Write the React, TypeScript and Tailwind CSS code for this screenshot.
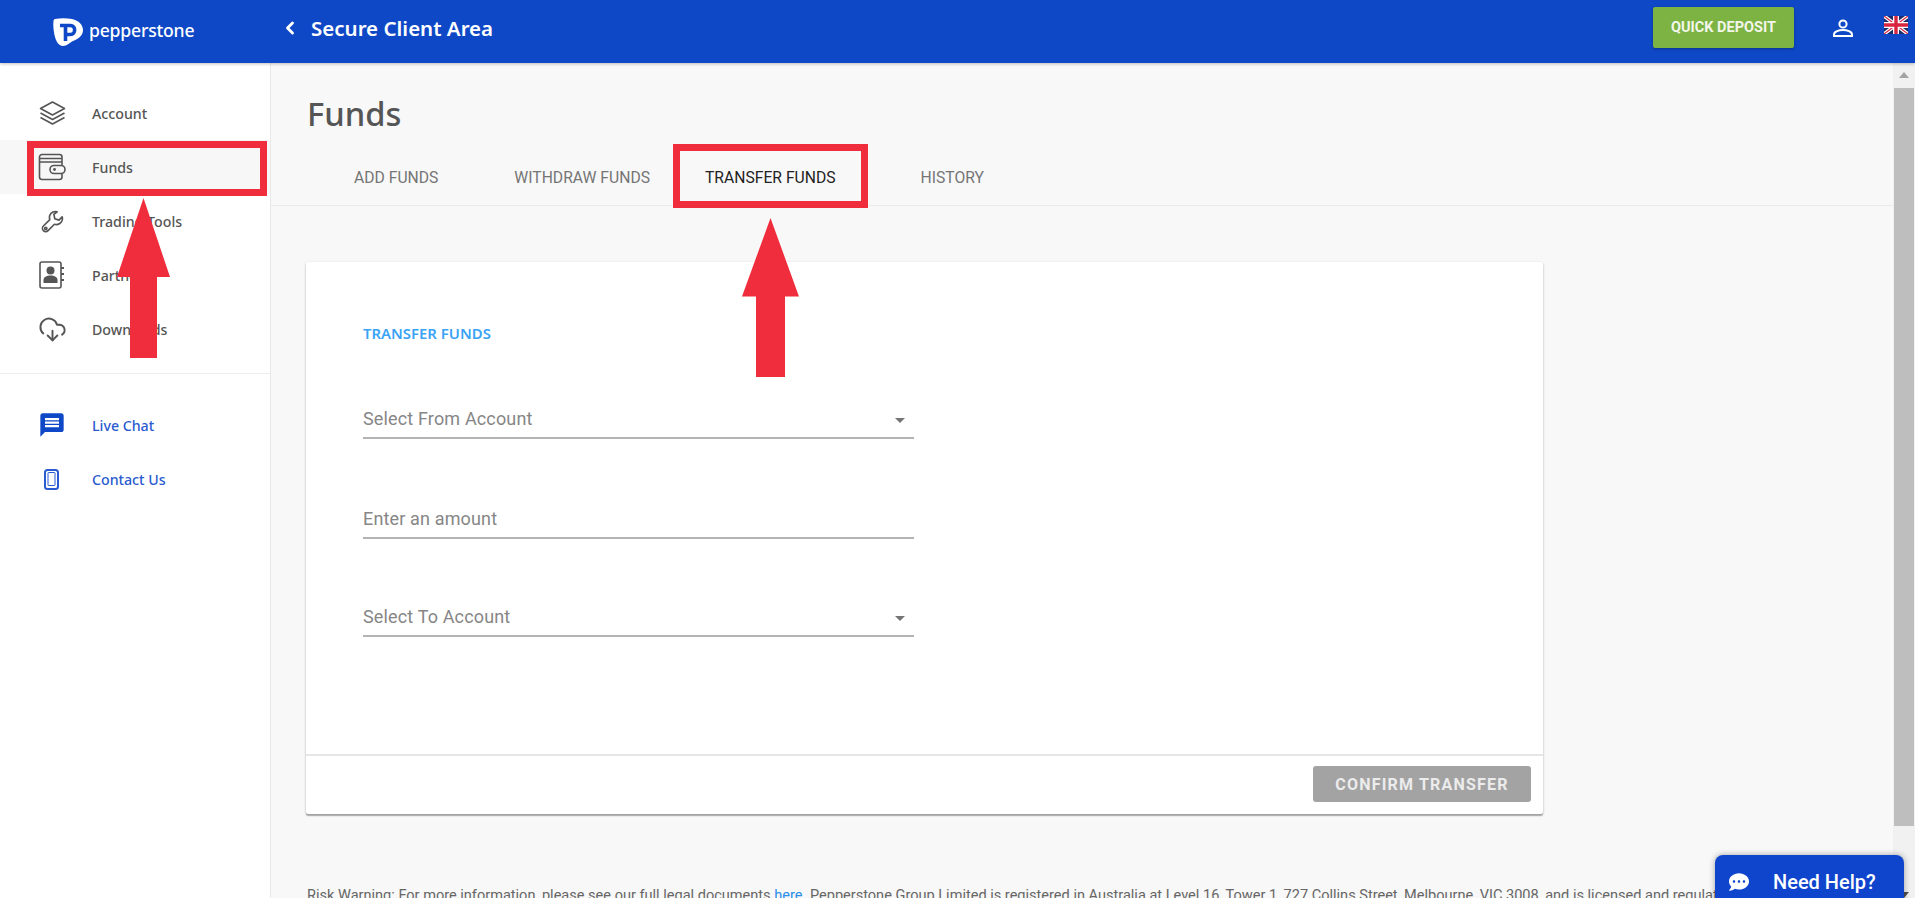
import { ChevronLeft, CloudDownload } from "lucide-react";
import { MdMessage } from "react-icons/md";
import { FaCommentDots } from "react-icons/fa";

function LayersIcon() {
  return (
    <svg width="27" height="24" viewBox="0 0 27 24" fill="none" stroke="#555" strokeWidth="1.6" strokeLinejoin="round">
      <path d="M13.5 1 25.5 7.5 13.5 14 1.5 7.5Z" />
      <path d="M1.5 12 13.5 18.5 25.5 12" />
      <path d="M1.5 16.5 13.5 23 25.5 16.5" />
    </svg>
  );
}

function WalletIcon() {
  return (
    <svg width="28" height="28" viewBox="0 0 28 28" fill="none" stroke="#555" strokeWidth="1.6">
      <path d="M24 13V4a2.5 2.5 0 0 0-2.5-2.5H4A2.5 2.5 0 0 0 1.5 4v20A2.5 2.5 0 0 0 4 26.5h17.5A2.5 2.5 0 0 0 24 24v-4" />
      <path d="M1.5 5.5H24M1.5 9H24" />
      <rect x="12" y="12.5" width="15" height="8" rx="4" fill="#f7f7f7" />
      <circle cx="16.5" cy="16.5" r="1.4" fill="#555" stroke="none" />
    </svg>
  );
}

function WrenchIcon() {
  return (
    <svg width="23" height="23" viewBox="0 0 25 25" fill="none" stroke="#555" strokeWidth="1.8" strokeLinejoin="round">
      <path d="M17.5 1.9A6.5 6.5 0 0 0 9.6 10.4L2.6 17.4a3.6 3.6 0 0 0 5.1 5.1L14.6 15.5A6.5 6.5 0 0 0 23 7.5L19.5 11 15 9.5 14 4.8Z" />
      <circle cx="5.2" cy="20" r="1.2" />
    </svg>
  );
}

function ContactsIcon() {
  return (
    <svg width="26" height="28" viewBox="0 0 26 28" fill="none">
      <rect x="1" y="1" width="21" height="26" rx="2" stroke="#555" strokeWidth="1.6" />
      <path d="M22 7h3M22 13h3M22 19h3" stroke="#555" strokeWidth="2" />
      <circle cx="11.5" cy="9.5" r="4" fill="#555" />
      <path d="M4.5 22v-3c0-3 3-4.5 7-4.5s7 1.5 7 4.5v3Z" fill="#555" />
    </svg>
  );
}

function PhoneIcon() {
  return (
    <svg width="15" height="21" viewBox="0 0 15 21" fill="none" stroke="#2a5bd0">
      <rect x="1" y="1" width="13" height="19" rx="2.5" strokeWidth="2" />
      <rect x="4" y="3.5" width="7" height="13" rx="0.5" strokeWidth="1" />
    </svg>
  );
}

function PersonIcon() {
  return (
    <svg width="20" height="18" viewBox="0 0 20 18" fill="none" stroke="#fff" strokeWidth="2">
      <circle cx="10" cy="5" r="3.6" />
      <path d="M1 17v-1.5C1 12.5 6 11 10 11s9 1.5 9 4.5V17Z" />
    </svg>
  );
}

function UkFlag() {
  return (
    <svg width="24" height="18" viewBox="0 0 24 18">
      <rect width="24" height="18" fill="#1b2a6b" />
      <path d="M0 0 24 18M24 0 0 18" stroke="#fff" strokeWidth="3.6" />
      <path d="M0 0 24 18M24 0 0 18" stroke="#d8243f" strokeWidth="1.2" />
      <path d="M12 0v18M0 9h24" stroke="#fff" strokeWidth="6" />
      <path d="M12 0v18M0 9h24" stroke="#d8243f" strokeWidth="3.4" />
    </svg>
  );
}

function Logo() {
  return (
    <svg width="30" height="28" viewBox="0 0 30 28">
      <path d="M2 1C8-.3 14 0 19 1c7 1.5 11 6 11 11 0 6-5 9-10 11-4 2-6 5-10 5-4 0-7-4-8.5-11C.5 12 0 7 .5 3 .6 2 1 1.3 2 1Z" fill="#fff" />
      <path d="M7 7.5h10.5c5.5 0 5.5 9 0 9H12M12.5 8v15" fill="none" stroke="#0e48c6" strokeWidth="3.6" />
    </svg>
  );
}

function Arrow({ className }: { className: string }) {
  return (
    <svg viewBox="0 0 53 160" preserveAspectRatio="none" className={className}>
      <path d="M26.5 0 53 79H40V160H13V79H0Z" fill="#f02d3c" />
    </svg>
  );
}

const menu = [
  { label: "Account", icon: <LayersIcon /> },
  { label: "Funds", icon: <WalletIcon />, active: true },
  { label: "Trading Tools", icon: <WrenchIcon /> },
  { label: "Partners", icon: <ContactsIcon />, shift: "ml-[-2px]" },
  { label: "Downloads", icon: <CloudDownload size={29} strokeWidth={1.6} color="#555" />, shift: "ml-[1px]" },
];

const tabs = [
  { label: "ADD FUNDS", className: "ml-[83px] text-[#757575]" },
  { label: "WITHDRAW FUNDS", className: "ml-[76px] text-[#757575]" },
  { label: "TRANSFER FUNDS", className: "ml-[55px] text-[#222]" },
  { label: "HISTORY", className: "ml-[85px] text-[#757575]" },
];

function Field({ label, caret, className }: { label: string; caret?: boolean; className: string }) {
  return (
    <div className={`flex h-[40px] w-[551px] items-center justify-between border-b-2 border-[#b4b4b4] text-[18px] tracking-[0.15px] text-[#868686] ${className}`}>
      <span>{label}</span>
      {caret && <span className="mr-[9px] mt-[5px] h-0 w-0 border-x-[5px] border-t-[5px] border-x-transparent border-t-[#757575]" />}
    </div>
  );
}

export default function App() {
  return (
    <div className="relative flex h-[898px] w-[1915px] flex-col overflow-hidden bg-white font-['Roboto',sans-serif]">
      <header className="z-10 flex h-[63px] shrink-0 items-center bg-[#0e48c6] shadow-[0_1px_3px_rgba(0,0,0,0.25)]">
        <div className="flex w-[270px] items-center pl-[53px] pt-[2px]">
          <Logo />
          <span className="mb-[4px] ml-[6px] font-['Noto_Sans',sans-serif] text-[17.6px] font-medium tracking-[-0.2px] text-white">pepperstone</span>
        </div>
        <ChevronLeft size={20} strokeWidth={3.5} color="#fff" className="mb-[8px] ml-[10px]" />
        <span className="mb-[6px] ml-[11px] font-['Noto_Sans',sans-serif] text-[20.5px] font-semibold text-white">Secure Client Area</span>
        <button className="mb-[8px] ml-auto mr-[39px] h-[41px] w-[141px] rounded-[2px] bg-[#7cb342] text-[14.5px] font-bold text-[#f2f6ea] shadow-[0_1px_3px_rgba(0,0,0,0.3)]">
          QUICK DEPOSIT
        </button>
        <span className="mb-[8px] mr-[31px]">
          <PersonIcon />
        </span>
        <span className="mb-[14px] mr-[7px]">
          <UkFlag />
        </span>
      </header>

      <div className="flex min-h-0 flex-1">
        <aside className="w-[270px] shrink-0 pt-[23px] font-['Noto_Sans',sans-serif] text-[14.2px] font-medium">
          {menu.map((item) => (
            <div key={item.label} className={`flex h-[54px] items-center ${item.active ? "bg-[#f7f7f7]" : ""}`}>
              <span className="ml-[32px] flex w-[40px] justify-center">{item.icon}</span>
              <span className={`ml-[20px] mt-[2px] text-[#555] ${item.shift ?? ""}`}>{item.label}</span>
            </div>
          ))}
          <div className="mb-[24px] mt-[17px] h-px bg-[#ececec]" />
          <div className="flex h-[54px] items-center">
            <span className="ml-[32px] flex w-[40px] justify-center">
              <MdMessage size={28} color="#0e48c6" />
            </span>
            <span className="ml-[20px] mt-[2px] text-[#2a5bd0]">Live Chat</span>
          </div>
          <div className="flex h-[54px] items-center">
            <span className="ml-[31px] flex w-[40px] justify-center">
              <PhoneIcon />
            </span>
            <span className="ml-[21px] mt-[2px] text-[#2a5bd0]">Contact Us</span>
          </div>
        </aside>

        <main className="min-w-0 flex-1 overflow-hidden border-l border-[#e8e8e8] bg-[#f8f8f8]">
          <h1 className="ml-[36px] mt-[26px] h-[50px] font-['Noto_Sans',sans-serif] text-[32.7px] font-medium leading-[50px] text-[#555]">Funds</h1>
          <div className="mt-[12px] flex h-[55px] items-center border-b border-[#ebebeb] text-[15.7px]">
            {tabs.map((tab) => (
              <span key={tab.label} className={tab.className}>
                {tab.label}
              </span>
            ))}
          </div>

          <section className="ml-[35px] mt-[56px] flex h-[552px] w-[1237px] flex-col rounded-[2px] bg-white shadow-[0_1px_3px_rgba(0,0,0,0.2),0_2px_1px_rgba(0,0,0,0.25)]">
            <div className="flex-1 pl-[57px] pt-[61px]">
              <h2 className="font-['Noto_Sans',sans-serif] text-[14.9px] font-semibold leading-[20px] text-[#3aa3f5]">TRANSFER FUNDS</h2>
              <Field label="Select From Account" caret className="mt-[56px]" />
              <Field label="Enter an amount" className="mt-[60px]" />
              <Field label="Select To Account" caret className="mt-[58px]" />
            </div>
            <div className="flex h-[60px] items-start justify-end border-t-2 border-[#e6e6e6] pr-[12px] pt-[10px]">
              <button className="h-[36px] w-[218px] rounded-[3px] bg-[#a3a3a3] pt-[2px] text-[16px] font-bold tracking-[1.2px] text-[#ececec]">CONFIRM TRANSFER</button>
            </div>
          </section>

          <p className="ml-[36px] mt-[71px] whitespace-nowrap text-[14.55px] text-[#666]">
            Risk Warning: For more information, please see our full legal documents <span className="text-[#2a8fe8]">here</span>. Pepperstone Group Limited is registered in Australia at Level 16, Tower 1, 727 Collins Street, Melbourne, VIC 3008, and is licensed and regulated
          </p>
        </main>

        <div className="flex w-[22px] shrink-0 flex-col items-center bg-[#f1f1f1]">
          <span className="mt-[9px] h-0 w-0 border-x-[5px] border-b-[6px] border-x-transparent border-b-[#a3a3a3]" />
          <div className="mt-[10px] h-[738px] w-[20px] bg-[#bebebe]" />
          <span className="mt-[66px] h-0 w-0 border-x-[5px] border-t-[6px] border-x-transparent border-t-[#505050]" />
        </div>
      </div>

      {/* red markers drawn over the page */}
      <div className="absolute left-[27px] top-[141px] h-[55px] w-[240px] border-[7px] border-[#f02d3c]" />
      <div className="absolute left-[673px] top-[144px] h-[64px] w-[195px] border-[7px] border-[#f02d3c]" />
      <Arrow className="absolute left-[117px] top-[198px] h-[160px] w-[53px]" />
      <Arrow className="absolute left-[742px] top-[218px] h-[159px] w-[57px]" />

      <div className="absolute left-[1715px] top-[855px] flex h-[50px] w-[189px] items-start rounded-t-[8px] bg-[#0f45cd] pl-[14px] pt-[15px] shadow-[0_0_6px_rgba(0,0,0,0.35)]">
        <FaCommentDots size={20} color="#fff" className="mt-[2px]" />
        <span className="ml-[24px] text-[20px] font-medium leading-[24px] text-white">Need Help?</span>
      </div>
    </div>
  );
}
